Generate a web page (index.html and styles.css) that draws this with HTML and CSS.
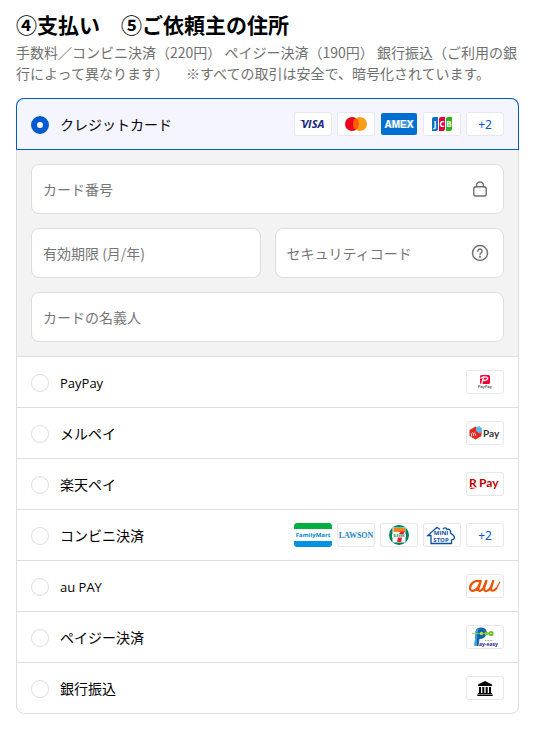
FILE: index.html
```html
<!DOCTYPE html>
<html lang="ja">
<head>
  <meta charset="UTF-8" />
  <title>お支払い</title>
  <meta name="viewport" content="width=device-width, initial-scale=1.0" />
  <link rel="stylesheet" href="styles.css">
</head>
<body>

<main class="payment">
  <h2 id="payment-title">④支払い　⑤ご依頼主の住所</h2>
  <p class="note">手数料／コンビニ決済（220円） ペイジー決済（190円） 銀行振込（ご利用の銀行によって異なります） 　※すべての取引は安全で、暗号化されています。</p>

  <form class="methods" aria-labelledby="payment-title">
    <div class="method selected">
      <input type="radio" name="method" id="credit" checked>
      <label for="credit">クレジットカード</label>
      <div class="brands">
        <svg class="brand" viewBox="0 0 38 24" role="img" aria-label="Visa">
          <text x="19" y="16" class="visa">VISA</text>
          <path d="M5.5 8h3.6l1.3 3.6C9.400 9.700 7.800 8.600 5.500 8z" fill="#1a2484"/>
        </svg>
        <svg class="brand" viewBox="0 0 38 24" role="img" aria-label="Mastercard">
          <circle cx="15" cy="12" r="7" fill="#eb001b"/>
          <circle cx="23" cy="12" r="7" fill="#f79e1b"/>
          <path d="M19 6.250a7 7 0 0 1 0 11.500a7 7 0 0 1 0-11.500z" fill="#ff5f00"/>
        </svg>
        <svg class="brand full" viewBox="0 0 38 24" role="img" aria-label="American Express">
          <rect x="1" y="1" width="36" height="22" rx="2" fill="#006fcf"/>
          <path d="M4 15.500L8 8h24l2.500 0L32 12l2.500 3.500z" fill="#fff" fill-opacity=".25"/>
          <text x="19" y="16" class="amex">AMEX</text>
        </svg>
        <svg class="brand" viewBox="0 0 38 24" role="img" aria-label="JCB">
          <path d="M11 5h4v12q0 2-2 2H9V7q0-2 2-2z" fill="#0b72bd"/>
          <path d="M18 5h4v12q0 2-2 2h-4V7q0-2 2-2z" fill="#e6003c"/>
          <path d="M25 5h4v12q0 2-2 2h-4V7q0-2 2-2z" fill="#2bb41a"/>
          <text x="12" y="15" class="jcb">J</text>
          <text x="19" y="15" class="jcb">C</text>
          <text x="26" y="15" class="jcb">B</text>
        </svg>
        <button type="button" class="brand more">+2</button>
      </div>
    </div>

    <div class="card-form">
      <div class="field wide">
        <input type="text" placeholder="カード番号" aria-label="カード番号">
        <svg class="field-icon" viewBox="0 0 18 18" aria-hidden="true">
          <rect x="2.700" y="6.700" width="12.600" height="9.300" rx="2.200"/>
          <path d="M5.500 6.700V5.500a3.500 3.500 0 0 1 7 0v1.200"/>
        </svg>
      </div>
      <div class="field">
        <input type="text" placeholder="有効期限 (月/年)" aria-label="有効期限 (月/年)">
      </div>
      <div class="field">
        <input type="text" placeholder="セキュリティコード" aria-label="セキュリティコード">
        <svg class="field-icon" viewBox="0 0 18 18" aria-hidden="true">
          <circle cx="9" cy="9" r="7.500"/>
          <path d="M6.900 7.200a2.100 2.100 0 1 1 3.400 1.600c-.8.6-1.300.9-1.300 1.800"/>
          <circle cx="9" cy="12.900" r=".4"/>
        </svg>
      </div>
      <div class="field wide">
        <input type="text" placeholder="カードの名義人" aria-label="カードの名義人">
      </div>
    </div>

    <div class="method">
      <input type="radio" name="method" id="paypay">
      <label for="paypay" class="latin">PayPay</label>
      <div class="brands">
        <svg class="brand" viewBox="0 0 38 24" role="img" aria-label="PayPay">
          <rect x="14" y="5" width="10" height="9" rx="1.500" fill="#ff0033"/>
          <path d="M14.500 8.200c3-1.600 7.500-1.800 7.200.1-.2 1.400-2.500 2.200-5 2.200M17.700 6.500l-2 7.500" fill="none" stroke="#fff" stroke-width="1.300"/>
          <text x="19" y="18" class="paypay">PayPay</text>
        </svg>
      </div>
    </div>

    <div class="method">
      <input type="radio" name="method" id="merpay">
      <label for="merpay">メルペイ</label>
      <div class="brands">
        <svg class="brand" viewBox="0 0 38 24" role="img" aria-label="メルペイ">
          <path d="M3.500 9l6-3.500L15.500 9v6l-6 3.500-6-3.500z" fill="#e8281e"/>
          <path d="M10 6l3.500-.8L16 7.500V11l-3 1.300L10 10z" fill="#5bb8f0"/>
          <path d="M5.500 15.500v-3l1-.8 1 .8v2.500M7.500 12.500l1.200-.5.8.8v2" fill="none" stroke="#fff" stroke-width=".8"/>
          <text x="17" y="16" class="merpay">Pay</text>
        </svg>
      </div>
    </div>

    <div class="method">
      <input type="radio" name="method" id="rakuten">
      <label for="rakuten">楽天ペイ</label>
      <div class="brands">
        <svg class="brand" viewBox="0 0 38 24" role="img" aria-label="楽天ペイ">
          <text x="3" y="15" class="rakuten">R</text>
          <path d="M3 15.700h8.500L5 17z" fill="#bf0000"/>
          <text x="13" y="15" class="rakuten">Pay</text>
        </svg>
      </div>
    </div>

    <div class="method">
      <input type="radio" name="method" id="konbini">
      <label for="konbini">コンビニ決済</label>
      <div class="brands">
        <svg class="brand full" viewBox="0 0 38 24" role="img" aria-label="FamilyMart">
          <rect width="38" height="24" rx="2" fill="#fff"/>
          <path d="M2 0h34q2 0 2 2v4H0V2q0-2 2-2z" fill="#00b140"/>
          <path d="M0 18h38v4q0 2-2 2H2q-2 0-2-2z" fill="#0092e0"/>
          <text x="19" y="14" class="family">FamilyMart</text>
        </svg>
        <svg class="brand" viewBox="0 0 38 24" role="img" aria-label="LAWSON">
          <text x="19" y="15" class="lawson">LAWSON</text>
        </svg>
        <svg class="brand" viewBox="0 0 38 24" role="img" aria-label="セブン-イレブン">
          <circle cx="19" cy="12" r="10" fill="#008061"/>
          <path d="M12.500 4.500h13v15h-13z" fill="#fff"/>
          <path d="M13.500 5h11.500v4H13.500z" fill="#f58220"/>
          <path d="M21 8.500h4c-2 3-3.500 6-3.700 10.500h-4c0-4.500 1.200-8 3.700-10.500z" fill="#ee1c25"/>
          <path d="M12 11h14v3.500H12z" fill="#fff"/>
          <text x="19" y="14" class="seven">ELEVEN</text>
        </svg>
        <svg class="brand" viewBox="0 0 38 24" role="img" aria-label="MINISTOP">
          <path d="M8 12v8.500h20.500V17c2.600 0 4-2.400 2-4.500l-3-2.500c1-2.500-1.500-4.500-3.500-3.500-.6-2-3.200-2.200-4-.3M8 12.500H4.800L14 4.300l3 2.200" fill="none" stroke="#0b4ea2" stroke-width="1.300"/>
          <text x="18" y="12" class="mini">MINI</text>
          <text x="18" y="19" class="mini">STOP</text>
        </svg>
        <button type="button" class="brand more">+2</button>
      </div>
    </div>

    <div class="method">
      <input type="radio" name="method" id="aupay">
      <label for="aupay" class="latin">au PAY</label>
      <div class="brands">
        <svg class="brand" viewBox="0 0 38 24" role="img" aria-label="au PAY">
          <g fill="none" stroke="#eb5505" stroke-width="2.200" stroke-linecap="round" stroke-linejoin="round">
            <path d="M14.500 7.500C9 5.500 4 9.500 4 14c0 4.500 6.500 3.500 9-2.500l1.800-4.500-2.300 7.500c-.8 3.500 3 2.800 5-.5L20.300 7"/>
            <path d="M20.300 7l-2 6.500c-1.300 5.500 4.500 4 6.700-.5L27.200 7l-2 7c-1 4 3.300 3.300 5.300.2"/>
            <path d="M30.500 14.200l3.200-6" stroke-width="1.300"/>
          </g>
        </svg>
      </div>
    </div>

    <div class="method">
      <input type="radio" name="method" id="payeasy">
      <label for="payeasy">ペイジー決済</label>
      <div class="brands">
        <svg class="brand" viewBox="0 0 38 24" role="img" aria-label="Pay-easy">
          <path d="M8.500 21L9.500 7C9.800 3.800 12 2.500 15 2.500c4.500 0 6.500 3 5.500 6.500-1 3.500-3.500 5-7 5l-1 7z" fill="#1266b1"/>
          <path d="M8.500 21L9.500 7c.3-2.500 1.500-3.800 3.500-4.200C11 7 10.800 14 11 21z" fill="#39a5d8"/>
          <path d="M6 8.500h21" stroke="#9ccc3c" stroke-width=".8"/>
          <circle cx="15.500" cy="8.500" r="1.800" fill="#b9dc30"/>
          <circle cx="20.500" cy="8.500" r="2" fill="#8cc63f"/>
          <circle cx="25" cy="8.500" r="2.600" fill="#6bb52c"/>
          <circle cx="25" cy="8.500" r=".9" fill="#d8ed9f"/>
          <path d="M19 15.500h8" stroke="#888" stroke-width=".8" stroke-dasharray="1 .6"/>
          <text x="13" y="21" class="payeasy">ay-easy</text>
        </svg>
      </div>
    </div>

    <div class="method">
      <input type="radio" name="method" id="bank">
      <label for="bank">銀行振込</label>
      <div class="brands">
        <svg class="brand" viewBox="0 0 38 24" role="img" aria-label="銀行振込">
          <path d="M19 5l7 3.600V10H12V8.600zM13 11h2v6h-2zm3.300 0h2v6h-2zm3.400 0h2v6h-2zm3.300 0h2v6h-2zM12 17h14v1H12zm-.7 1.600h15.400V20H11.300z" fill="#000"/>
        </svg>
      </div>
    </div>
  </form>
</main>

</body>
</html>
```

FILE: styles.css
```css
* {
  box-sizing: border-box;
  margin: 0;
  padding: 0;
}

body {
  font-family: "Noto Sans CJK JP", sans-serif;
  font-size: 14px;
  color: #000;
  background: #fff;
}

.payment {
  padding: 8px 17px 17px 16px;
}

h2 {
  font-size: 21px;
  line-height: 32px;
  margin-bottom: 2px;
}

.note {
  line-height: 21px;
  color: #707070;
  margin-bottom: 14px;
}

.methods {
  border: 1px solid #dedede;
  border-radius: 8px;
}

/* one row per payment method */
.method {
  display: flex;
  align-items: center;
  height: 51px;
  padding: 0 14px;
  border-top: 1px solid #dedede;
}

.method label {
  flex: 1;
  line-height: 20px;
}

.method .latin {
  font-family: "Open Sans", sans-serif;
  font-size: 13px;
  padding-top: 2px;
}

.method.selected {
  position: relative;
  height: 50px;
  border-top: none;
  border-radius: 7px 7px 0 0;
  background: #f4f5ff;
  box-shadow: 0 0 0 1px #005bd1;
}

input[type="radio"] {
  appearance: none;
  width: 18px;
  height: 18px;
  margin: 2px 11px 0 0;
  border: 1px solid #dedede;
  border-radius: 50%;
  background: #fff;
}

input[type="radio"]:checked {
  border: 6px solid #005bd1;
}

/* logos */
.brands {
  display: flex;
  gap: 5px;
}

.brand {
  display: block;
  width: 38px;
  height: 24px;
  border-radius: 3px;
  background: #fff;
  box-shadow: inset 0 0 0 1px #e8e8ec;
}

.brand.full {
  background: none;
  box-shadow: none;
}

.more {
  border: none;
  font-family: "Noto Sans", sans-serif;
  font-size: 12px;
  color: #005bd1;
  cursor: pointer;
}

.brand text {
  font-family: "Open Sans", sans-serif;
  font-weight: bold;
}

.visa {
  font-size: 11px;
  font-style: italic;
  text-anchor: middle;
  fill: #1a2484;
}

.brand .amex {
  font-family: "Liberation Sans", sans-serif;
  font-size: 10px;
  text-anchor: middle;
  fill: #fff;
}

.jcb {
  font-size: 8px;
  text-anchor: middle;
  fill: #fff;
}

.brand .paypay {
  font-size: 4px;
  font-weight: 600;
  text-anchor: middle;
  fill: #333;
}

.brand .merpay {
  font-family: Lato, sans-serif;
  font-size: 10px;
  fill: #333;
}

.brand .rakuten {
  font-family: Lato, sans-serif;
  font-size: 12px;
  fill: #bf0000;
}

.family {
  font-size: 6px;
  text-anchor: middle;
  fill: #0086d1;
}

.brand .lawson {
  font-family: "Liberation Serif", serif;
  font-size: 8px;
  text-anchor: middle;
  fill: #1c85c7;
}

.seven {
  font-size: 3px;
  text-anchor: middle;
  fill: #008061;
}

.mini {
  font-size: 6px;
  text-anchor: middle;
  fill: #0b4ea2;
}

.payeasy {
  font-size: 5px;
  fill: #1a2a8c;
}

/* card details */
.card-form {
  display: grid;
  grid-template-columns: 1fr 1fr;
  gap: 14px;
  padding: 14px;
  border-top: 1px solid #dedede;
  background: #f3f3f3;
}

.field {
  position: relative;
}

.wide {
  grid-column: 1 / -1;
}

.field input {
  display: block;
  width: 100%;
  height: 50px;
  padding: 0 11px;
  border: 1px solid #dedede;
  border-radius: 8px;
  background: #fff;
  font-family: inherit;
  font-size: 14px;
}

.field input::placeholder {
  color: #757575;
}

.field-icon {
  position: absolute;
  top: 16px;
  right: 15px;
  width: 18px;
  height: 18px;
  fill: none;
  stroke: #707070;
  stroke-width: 1.4;
  stroke-linecap: round;
}
```
